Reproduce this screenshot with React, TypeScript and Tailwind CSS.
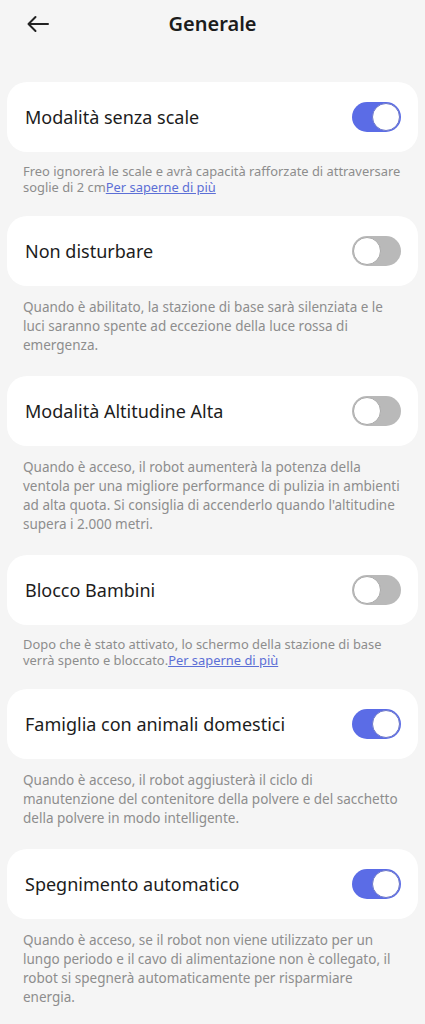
import React from 'react'

interface SettingItem {
  key: string
  title: string
  enabled: boolean
  description: string
  link?: string
}

const items: SettingItem[] = [
  {
    key: 'stairs',
    title: 'Modalità senza scale',
    enabled: true,
    description: 'Freo ignorerà le scale e avrà capacità rafforzate di attraversare soglie di 2 cm',
    link: 'Per saperne di più',
  },
  {
    key: 'dnd',
    title: 'Non disturbare',
    enabled: false,
    description:
      'Quando è abilitato, la stazione di base sarà silenziata e le luci saranno spente ad eccezione della luce rossa di emergenza.',
  },
  {
    key: 'altitude',
    title: 'Modalità Altitudine Alta',
    enabled: false,
    description:
      "Quando è acceso, il robot aumenterà la potenza della ventola per una migliore performance di pulizia in ambienti ad alta quota. Si consiglia di accenderlo quando l'altitudine supera i 2.000 metri.",
  },
  {
    key: 'child',
    title: 'Blocco Bambini',
    enabled: false,
    description: 'Dopo che è stato attivato, lo schermo della stazione di base verrà spento e bloccato.',
    link: 'Per saperne di più',
  },
  {
    key: 'pets',
    title: 'Famiglia con animali domestici',
    enabled: true,
    description:
      'Quando è acceso, il robot aggiusterà il ciclo di manutenzione del contenitore della polvere e del sacchetto della polvere in modo intelligente.',
  },
  {
    key: 'autooff',
    title: 'Spegnimento automatico',
    enabled: true,
    description:
      'Quando è acceso, se il robot non viene utilizzato per un lungo periodo e il cavo di alimentazione non è collegato, il robot si spegnerà automaticamente per risparmiare energia.',
  },
]

function Toggle({ on }: { on: boolean }) {
  return (
    <div
      className={`flex h-[30px] w-[49px] items-center rounded-full p-[1px] ${
        on ? 'justify-end bg-[#5b6ce6]' : 'justify-start bg-[#b9b9b9]'
      }`}
    >
      <div
        className={`h-[28px] w-[28px] rounded-full bg-white border-[1.5px] ${
          on ? 'border-[#6e78c8]' : 'border-[#a9a9a9]'
        }`}
      />
    </div>
  )
}

export default function App() {
  return (
    <div
      className="min-h-[1024px] w-full bg-[#f5f5f5] pb-6"
      style={{ fontFamily: '"Noto Sans", Roboto, sans-serif' }}
    >
      {/* Header */}
      <div className="relative flex h-[48px] items-center justify-center">
        <svg
          className="absolute left-[26px] top-[15px]"
          width="24"
          height="18"
          viewBox="0 0 24 18"
          fill="none"
          stroke="#222"
          strokeWidth="2"
          strokeLinecap="round"
          strokeLinejoin="round"
        >
          <path d="M22 9H2.5M9.5 2L2.5 9l7 7" />
        </svg>
        <h1 className="text-[20px] font-semibold text-[#1c1c1c]">Generale</h1>
      </div>

      <div className="mt-[34px] flex flex-col">
        {items.map(item => (
          <div key={item.key}>
            <div className="mx-[7px] flex h-[70px] items-center justify-between rounded-[20px] bg-white pl-[18px] pr-[17px]">
              <span className="text-[18px] text-[#1c1c1c]">{item.title}</span>
              <Toggle on={item.enabled} />
            </div>
            {/* descriptions with a link render tighter, like in the app */}
            <p
              className={`pl-[23px] text-[#8d8d8d] ${
                item.link
                  ? 'pr-[12px] pt-[11px] pb-[21px] text-[12.9px] leading-[16px]'
                  : 'pr-[18px] pt-[12px] pb-[21px] text-[13.5px] leading-[19px]'
              }`}
            >
              {item.description}
              {item.link && <span className="text-[#5c6fd6] underline">{item.link}</span>}
            </p>
          </div>
        ))}
      </div>
    </div>
  )
}
